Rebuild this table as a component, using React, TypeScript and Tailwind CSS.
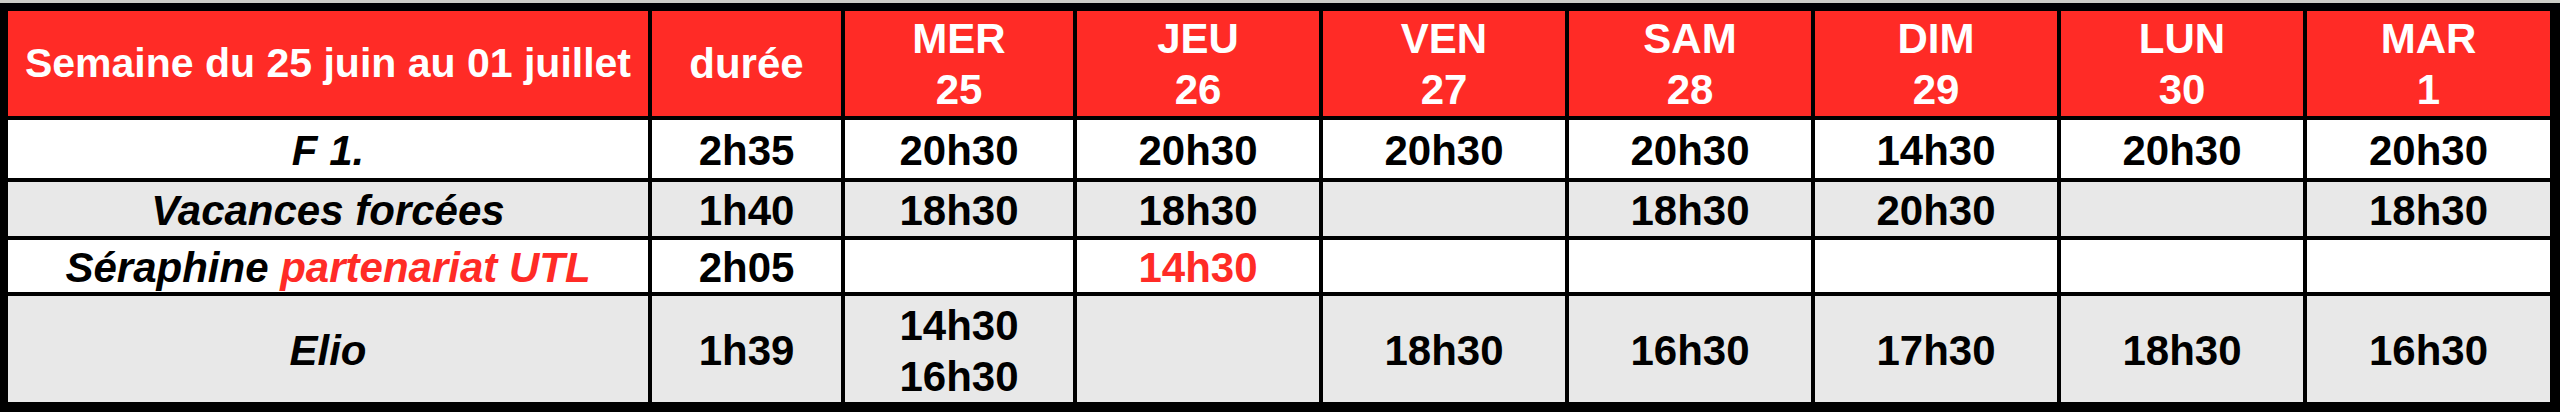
import React from "react";

const RED = "bg-[#ff2b26]";

type Cell = { lines: string[]; red?: boolean };

const days = [
  ["MER", "25"],
  ["JEU", "26"],
  ["VEN", "27"],
  ["SAM", "28"],
  ["DIM", "29"],
  ["LUN", "30"],
  ["MAR", "1"],
];

const rows: { title: React.ReactNode; dur: string; grey: boolean; cells: Cell[] }[] = [
  {
    title: "F 1.",
    dur: "2h35",
    grey: false,
    cells: [
      { lines: ["20h30"] },
      { lines: ["20h30"] },
      { lines: ["20h30"] },
      { lines: ["20h30"] },
      { lines: ["14h30"] },
      { lines: ["20h30"] },
      { lines: ["20h30"] },
    ],
  },
  {
    title: "Vacances forcées",
    dur: "1h40",
    grey: true,
    cells: [
      { lines: ["18h30"] },
      { lines: ["18h30"] },
      { lines: [] },
      { lines: ["18h30"] },
      { lines: ["20h30"] },
      { lines: [] },
      { lines: ["18h30"] },
    ],
  },
  {
    title: (
      <>
        Séraphine <span className="text-[#ff2b26]">partenariat UTL</span>
      </>
    ),
    dur: "2h05",
    grey: false,
    cells: [
      { lines: [] },
      { lines: ["14h30"], red: true },
      { lines: [] },
      { lines: [] },
      { lines: [] },
      { lines: [] },
      { lines: [] },
    ],
  },
  {
    title: "Elio",
    dur: "1h39",
    grey: true,
    cells: [
      { lines: ["14h30", "16h30"] },
      { lines: [] },
      { lines: ["18h30"] },
      { lines: ["16h30"] },
      { lines: ["17h30"] },
      { lines: ["18h30"] },
      { lines: ["16h30"] },
    ],
  },
];

export default function App() {
  return (
    <div className="w-[2560px] h-[412px] bg-black flex flex-col font-['Liberation_Sans',Arial,sans-serif] font-bold text-[42px] leading-[51px] overflow-hidden">
      <div className="h-[3px] bg-[#cdcdc5]" />
      <div className="pt-[8px] pl-[8px] pr-[10px] pb-[10px]">
        <div className="grid grid-cols-[640px_189px_228px_repeat(5,242px)_1fr] grid-rows-[105px_58px_54px_52px_106px] gap-[4px]">
          <div className={`${RED} text-white flex items-center justify-center text-center whitespace-nowrap text-[41px]`}>
            Semaine du 25 juin au 01 juillet
          </div>
          <div className={`${RED} text-white flex items-center justify-center`}>durée</div>
          {days.map(([d, n]) => (
            <div key={d} className={`${RED} text-white flex flex-col items-center justify-center`}>
              <span>{d}</span>
              <span>{n}</span>
            </div>
          ))}
          {rows.map((r, i) => {
            const bg = r.grey ? "bg-[#e8e8e8]" : "bg-white";
            return (
              <React.Fragment key={i}>
                <div className={`${bg} text-black italic flex items-center justify-center whitespace-nowrap pt-[3px]`}>
                  <span>{r.title}</span>
                </div>
                <div className={`${bg} text-black flex items-center justify-center pt-[3px]`}>{r.dur}</div>
                {r.cells.map((c, j) => (
                  <div
                    key={j}
                    className={`${bg} ${c.red ? "text-[#ff2b26]" : "text-black"} flex flex-col items-center justify-center pt-[3px]`}
                  >
                    {c.lines.map((l, k) => (
                      <span key={k}>{l}</span>
                    ))}
                  </div>
                ))}
              </React.Fragment>
            );
          })}
        </div>
      </div>
    </div>
  );
}
